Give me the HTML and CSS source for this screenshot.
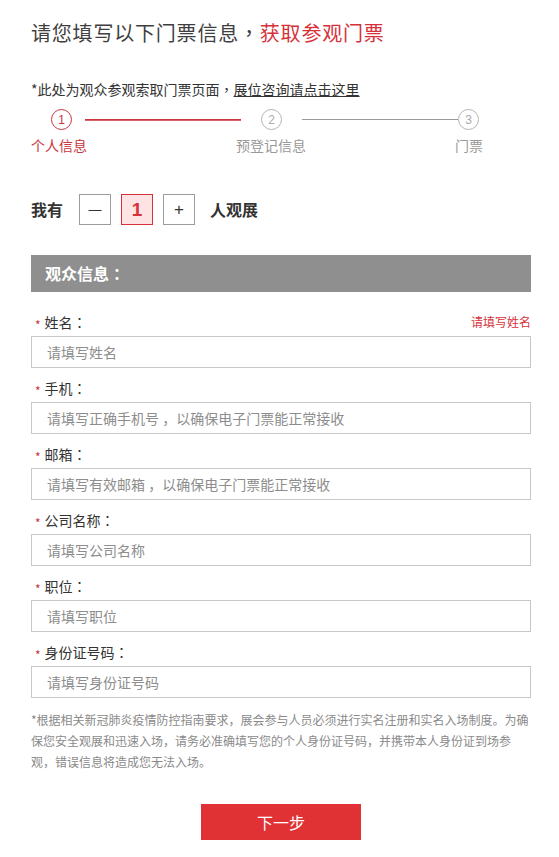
FILE: index.html
```html
<!DOCTYPE html>
<html lang="zh-CN">
<head>
<meta charset="utf-8">
<title>获取参观门票</title>
<link rel="stylesheet" href="styles.css">
</head>
<body>
<div class="page">
  <h1 class="title">请您填写以下门票信息<span class="punct" lang="zh-TW">，</span><span class="red">获取参观门票</span></h1>
  <p class="notice">*此处为观众参观索取门票页面<span class="punct" lang="zh-TW">，</span><a class="notice-link" href="#">展位咨询请点击这里</a></p>

  <div class="steps">
    <div class="track">
      <span class="dot dot-active">1</span>
      <span class="line line-first line-active"></span>
      <span class="dot">2</span>
      <span class="line line-second"></span>
      <span class="dot">3</span>
    </div>
    <div class="step-labels">
      <span class="step-label step-label-active">个人信息</span>
      <span class="step-label">预登记信息</span>
      <span class="step-label">门票</span>
    </div>
  </div>

  <div class="counter">
    <span class="counter-text">我有</span>
    <div class="counter-controls">
      <span class="box box-minus">—</span>
      <span class="box box-value">1</span>
      <span class="box">+</span>
    </div>
    <span class="counter-text">人观展</span>
  </div>

  <div class="section-bar">观众信息<span class="punct" lang="zh-TW">：</span></div>

  <form class="form">
    <div class="field">
      <div class="field-head">
        <label class="field-label"><span class="star">*</span>姓名<span class="punct" lang="zh-TW">：</span></label>
        <span class="field-error">请填写姓名</span>
      </div>
      <input class="field-input" type="text" placeholder="请填写姓名">
    </div>
    <div class="field">
      <div class="field-head">
        <label class="field-label"><span class="star">*</span>手机<span class="punct" lang="zh-TW">：</span></label>
      </div>
      <input class="field-input" type="text" placeholder="请填写正确手机号 ，以确保电子门票能正常接收">
    </div>
    <div class="field">
      <div class="field-head">
        <label class="field-label"><span class="star">*</span>邮箱<span class="punct" lang="zh-TW">：</span></label>
      </div>
      <input class="field-input" type="text" placeholder="请填写有效邮箱 ，以确保电子门票能正常接收">
    </div>
    <div class="field">
      <div class="field-head">
        <label class="field-label"><span class="star">*</span>公司名称<span class="punct" lang="zh-TW">：</span></label>
      </div>
      <input class="field-input" type="text" placeholder="请填写公司名称">
    </div>
    <div class="field">
      <div class="field-head">
        <label class="field-label"><span class="star">*</span>职位<span class="punct" lang="zh-TW">：</span></label>
      </div>
      <input class="field-input" type="text" placeholder="请填写职位">
    </div>
    <div class="field">
      <div class="field-head">
        <label class="field-label"><span class="star">*</span>身份证号码<span class="punct" lang="zh-TW">：</span></label>
      </div>
      <input class="field-input" type="text" placeholder="请填写身份证号码">
    </div>
  </form>

  <p class="note">*根据相关新冠肺炎疫情防控指南要求，展会参与人员必须进行实名注册和实名入场制度。为确保您安全观展和迅速入场，请务必准确填写您的个人身份证号码，并携带本人身份证到场参观，错误信息将造成您无法入场。</p>

  <div class="actions">
    <button class="next-btn" type="button">下一步</button>
  </div>
</div>
</body>
</html>
```

FILE: styles.css
```css
* {
  box-sizing: border-box;
}

html, body {
  margin: 0;
  padding: 0;
  background: #ffffff;
}

body {
  font-family: "Noto Sans CJK SC", "Liberation Sans", sans-serif;
  color: #333333;
}

.page {
  width: 531px;
  padding: 19px 0 0 31px;
}

.punct {
  font-family: "Noto Sans CJK TC", "Noto Sans CJK SC", sans-serif;
}

.title {
  margin: 0;
  font-size: 20px;
  line-height: 28px;
  font-weight: normal;
  color: #3f3f3f;
  letter-spacing: 0.8px;
}

.red {
  color: #d6313a;
}

.notice {
  margin: 32px 0 0;
  font-size: 14px;
  line-height: 20px;
  color: #333333;
}

.notice-link {
  color: #333333;
  text-decoration: underline;
}

.steps {
  width: 452px;
  margin-top: 10px;
}

.track {
  display: flex;
  align-items: center;
  width: 448px;
  padding-left: 20px;
}

.dot {
  width: 21px;
  height: 21px;
  flex: none;
  border: 1px solid #b5b5b5;
  border-radius: 50%;
  display: flex;
  align-items: center;
  justify-content: center;
  font-family: "Liberation Sans", sans-serif;
  font-size: 12px;
  color: #aaaaaa;
}

.dot-active {
  border-color: #c9343d;
  color: #c9343d;
}

.line {
  flex: 1;
  height: 1px;
  background: #9a9a9a;
}

.line-first {
  margin: 0 20px 0 13px;
}

.line-second {
  margin: 0 0 0 20px;
}

.line-active {
  border-top: 1px solid #c9343d;
  height: 2px;
  background: #d9646b;
}

.step-labels {
  display: flex;
  justify-content: space-between;
  margin-top: 5px;
}

.step-label {
  font-size: 14px;
  line-height: 20px;
  color: #999999;
}

.step-label-active {
  color: #c9343d;
}

.counter {
  display: flex;
  align-items: center;
  margin-top: 39px;
}

.counter-text {
  font-size: 16px;
  font-weight: bold;
  color: #333333;
  line-height: 31px;
}

.counter-controls {
  display: flex;
  gap: 10px;
  margin: 0 15px 0 16px;
}

.box {
  width: 32px;
  height: 31px;
  border: 1px solid #9c9c9c;
  display: flex;
  align-items: center;
  justify-content: center;
  font-family: "Liberation Sans", sans-serif;
  font-size: 17px;
  font-weight: 300;
  color: #333333;
}

.box-minus {
  font-size: 13px;
}

.box-value {
  border-color: #d6313a;
  background: #fde3e3;
  color: #d6313a;
  font-size: 19px;
  font-weight: bold;
}

.section-bar {
  margin-top: 30px;
  width: 500px;
  height: 37px;
  background: #8f8f8f;
  color: #ffffff;
  font-size: 16px;
  font-weight: bold;
  line-height: 37px;
  padding-left: 14px;
}

.form {
  width: 500px;
  margin-top: 20px;
}

.field + .field {
  margin-top: 10px;
}

.field-head {
  display: flex;
  justify-content: space-between;
  align-items: center;
  height: 20px;
  margin-bottom: 4px;
}

.field-label {
  font-size: 14px;
  line-height: 20px;
  color: #333333;
}

.star {
  color: #c9343d;
  font-size: 12px;
  margin: 0 4px 0 4px;
  position: relative;
  top: 2px;
}

.field-error {
  font-size: 12px;
  line-height: 20px;
  color: #d6313a;
}

.field-input {
  display: block;
  width: 100%;
  height: 32px;
  border: 1px solid #c8c8c8;
  padding: 0 15px;
  font-family: "Noto Sans CJK SC", sans-serif;
  font-size: 14px;
  color: #333333;
  outline: none;
  background: #ffffff;
}

.field-input::placeholder {
  color: #8d8d8d;
}

.note {
  width: 500px;
  margin: 11px 0 0;
  font-size: 12px;
  line-height: 21px;
  color: #8a8a8a;
}

.actions {
  width: 500px;
  display: flex;
  justify-content: center;
  margin-top: 32px;
  padding-bottom: 19px;
}

.next-btn {
  width: 160px;
  height: 36px;
  border: none;
  background: #e03134;
  color: #ffffff;
  font-family: "Noto Sans CJK SC", sans-serif;
  font-size: 16px;
  cursor: pointer;
}
```
